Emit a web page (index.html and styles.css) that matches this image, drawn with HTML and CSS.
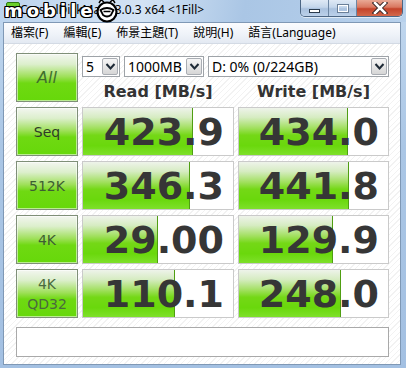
FILE: index.html
```html
<!DOCTYPE html>
<html lang="zh-Hant">
<head>
  <meta charset="UTF-8" />
  <title>CrystalDiskMark 3.0.3 x64</title>
  <link rel="stylesheet" href="styles.css">
</head>
<body>
  <div class="window">
    <div class="titlebar">
      <span class="app-icon"></span>
      <span class="title">CrystalDiskMark 3.0.3 x64 &lt;1Fill&gt;</span>
      <div class="caption">
        <span class="cap min"><span class="min-bar"></span></span>
        <span class="cap max"><span class="max-box"></span></span>
        <span class="cap close">
          <svg width="16" height="12" viewBox="0 0 16 12">
            <path d="M3 1 L13 11 M13 1 L3 11" stroke="#3a2a2a" stroke-width="4.5" stroke-linecap="square"/>
            <path d="M3 1 L13 11 M13 1 L3 11" stroke="#fff" stroke-width="2.5" stroke-linecap="square"/>
          </svg>
        </span>
      </div>
    </div>

    <!-- watermark sits over the caption -->
    <div class="watermark">
      <span class="wm-text">mobile</span>
      <svg class="wm-logo" width="26" height="24" viewBox="0 0 26 24">
        <path d="M5 4 L7 0.8 L10 3 M16 3 L19 0.8 L21 4" fill="#fff" stroke="#000" stroke-width="1.5"/>
        <circle cx="13" cy="13" r="9.5" fill="#fff" stroke="#000" stroke-width="2.2"/>
        <path d="M6.5 11 Q13 7 19.5 11 L17 16 Q13 19 9 16 Z" fill="#fff" stroke="#000" stroke-width="1.8"/>
        <path d="M9.5 12.5 L16.5 12.5" stroke="#000" stroke-width="1.5"/>
      </svg>
    </div>

    <div class="client">
      <div class="menubar">
        <span class="menu-item">檔案(F)</span>
        <span class="menu-item">編輯(E)</span>
        <span class="menu-item">佈景主題(T)</span>
        <span class="menu-item">說明(H)</span>
        <span class="menu-item">語言(Language)</span>
      </div>

      <div class="main">
        <div class="board">
          <div class="btn btn-all">All</div>
          <div class="top">
            <div class="selects">
              <div class="combo combo-count"><span class="combo-text">5</span><span class="combo-arrow"><svg width="13" height="13" viewBox="0 0 13 13"><path d="M2.5 4 L6.5 8.5 L10.5 4" fill="none" stroke="#1e2a36" stroke-width="2"/></svg></span></div>
              <div class="combo combo-size"><span class="combo-text">1000MB</span><span class="combo-arrow"><svg width="13" height="13" viewBox="0 0 13 13"><path d="M2.5 4 L6.5 8.5 L10.5 4" fill="none" stroke="#1e2a36" stroke-width="2"/></svg></span></div>
              <div class="combo combo-drive"><span class="combo-text">D: 0% (0/224GB)</span><span class="combo-arrow"><svg width="13" height="13" viewBox="0 0 13 13"><path d="M2.5 4 L6.5 8.5 L10.5 4" fill="none" stroke="#1e2a36" stroke-width="2"/></svg></span></div>
            </div>
            <div class="heads">
              <div class="head">Read [MB/s]</div>
              <div class="head">Write [MB/s]</div>
            </div>
          </div>

          <div class="btn btn-seq">Seq</div>
          <div class="cell"><div class="bar" style="width: 72.5%"></div><span class="num">423.9</span></div>
          <div class="cell"><div class="bar" style="width: 72.7%"></div><span class="num">434.0</span></div>

          <div class="btn">512K</div>
          <div class="cell"><div class="bar" style="width: 70.8%"></div><span class="num">346.3</span></div>
          <div class="cell"><div class="bar" style="width: 72.9%"></div><span class="num">441.8</span></div>

          <div class="btn">4K</div>
          <div class="cell"><div class="bar" style="width: 49.2%"></div><span class="num">29.00</span></div>
          <div class="cell"><div class="bar" style="width: 62.3%"></div><span class="num">129.9</span></div>

          <div class="btn btn-two">4K<br>QD32</div>
          <div class="cell"><div class="bar" style="width: 60.8%"></div><span class="num">110.1</span></div>
          <div class="cell"><div class="bar" style="width: 67.9%"></div><span class="num">248.0</span></div>

          <div class="comment"></div>
        </div>
      </div>
    </div>
  </div>
</body>
</html>
```

FILE: styles.css
```css
body {
  margin: 0;
  padding: 0;
  width: 406px;
  height: 368px;
  overflow: hidden;
  background: #b3cce8;
}

.window {
  position: relative;
  height: 368px;
  display: flex;
  flex-direction: column;
  background: linear-gradient(to bottom, #c2d8ef 0%, #aac6e5 40%, #a3c0e2 100%);
}

/* title bar */
.titlebar {
  height: 22px;
  display: flex;
  align-items: flex-start;
  background: linear-gradient(100deg, #bcd4ee 0%, #d3e3f4 35%, #aac6e5 60%, #b8d1ec 100%);
}

.app-icon {
  width: 12px;
  height: 4px;
  margin: 2px 0 0 6px;
  background: #6bcf2a;
  border: 1px solid #2f7a12;
  border-radius: 2px;
}

.title {
  margin-top: 2px;
  font-family: "Noto Sans", "Open Sans", sans-serif;
  font-size: 12px;
  line-height: 16px;
  color: #000;
  white-space: nowrap;
}

.caption {
  margin-left: auto;
  margin-right: 3px;
  display: flex;
  height: 16px;
  border: 1px solid #4c6684;
  border-top: none;
  border-radius: 0 0 5px 5px;
  overflow: hidden;
  box-shadow: 0 1px 0 rgba(255, 255, 255, 0.6);
}

.cap {
  display: flex;
  justify-content: center;
  align-items: center;
  height: 16px;
}

.min, .max {
  width: 27px;
  background: linear-gradient(to bottom, #dfe9f5 0%, #c4d6eb 45%, #a9c1de 55%, #bcd1ea 100%);
  border-right: 1px solid #6d86a3;
}

.close {
  width: 45px;
  background: linear-gradient(to bottom, #e9a995 0%, #d9775f 45%, #c4432a 55%, #d3694c 100%);
}

.min-bar {
  width: 9px;
  height: 2px;
  margin-top: 6px;
  background: #fff;
  border: 1px solid #2b3b4d;
}

.max-box {
  width: 8px;
  height: 5px;
  border: 1px solid #fff;
  outline: 1px solid #6a7f98;
}

/* watermark over the caption */
.watermark {
  position: absolute;
  left: 4px;
  top: -1px;
  display: flex;
  align-items: center;
}

.wm-text {
  font-family: "DejaVu Sans", sans-serif;
  font-weight: bold;
  font-size: 18px;
  letter-spacing: 4px;
  line-height: 22px;
  color: #fff;
  text-shadow: -1px -1px 0 #000, 1px -1px 0 #000, -1px 1px 0 #000, 1px 1px 0 #000,
    0 1px 0 #000, 0 -1px 0 #000, 1px 0 0 #000, -1px 0 0 #000;
}

.wm-logo {
  margin-left: -3px;
}

/* client area */
.client {
  flex: 1;
  display: flex;
  flex-direction: column;
  margin: 0 5px 3px 3px;
  border: 1px solid #7f98b5;
}

.menubar {
  height: 20px;
  display: flex;
  align-items: center;
  background: linear-gradient(to bottom, #fbfcfe 0%, #eef2f8 60%, #e3e9f2 100%);
  border-bottom: 1px solid #d3dae4;
  font-family: "Noto Sans", "Noto Sans CJK TC", sans-serif;
  font-size: 12px;
  color: #000;
}

.menu-item {
  padding: 0 7px;
  margin-right: 1px;
  line-height: 20px;
  white-space: nowrap;
}

.main {
  flex: 1;
  padding: 9px 11px 0 12px;
  background-color: #fff;
  background-image: repeating-linear-gradient(135deg, #fff 0, #fff 3px, #f2f2f2 3px, #f2f2f2 4px);
}

.board {
  display: grid;
  grid-template-columns: 62px 152px 151px;
  grid-template-rows: repeat(5, 49px) 34px;
  column-gap: 4px;
  row-gap: 5px;
}

/* left buttons */
.btn {
  display: flex;
  justify-content: center;
  align-items: center;
  box-sizing: border-box;
  border: 1px solid #7f8f78;
  box-shadow: inset 0 0 0 1px rgba(255, 255, 255, 0.55);
  background: linear-gradient(to bottom, #f3f6f0 0%, #dcefcc 22%, #9fe05a 48%, #6fd912 62%, #66d80a 100%);
  font-family: "DejaVu Sans", sans-serif;
  font-size: 14px;
  color: #3d5e32;
  text-align: center;
}

.btn-all {
  font-size: 16px;
  font-style: italic;
  color: #3f6f2c;
}

.btn-seq {
  color: #2e3c26;
}

.btn-two {
  line-height: 20px;
  padding-top: 1px;
  color: #4a6a3e;
}

/* top controls */
.top {
  grid-column: 2 / 4;
  display: flex;
  flex-direction: column;
}

.selects {
  display: flex;
  margin-top: 3px;
  height: 21px;
}

.combo {
  box-sizing: border-box;
  height: 21px;
  display: flex;
  align-items: center;
  background: #fff;
  border: 1px solid #9ea3a8;
  margin-right: 4px;
  font-family: "Noto Sans", "Open Sans", sans-serif;
  font-size: 14px;
  color: #000;
}

.combo-count {
  width: 38px;
}

.combo-size {
  width: 80px;
}

.combo-drive {
  width: 181px;
  margin-right: 0;
}

.combo-text {
  flex: 1;
  padding-left: 3px;
  line-height: 19px;
  white-space: nowrap;
  overflow: hidden;
}

.combo-arrow {
  width: 16px;
  height: 17px;
  margin-right: 1px;
  box-sizing: border-box;
  display: flex;
  justify-content: center;
  align-items: center;
  border: 1px solid #a9adb3;
  border-radius: 2px;
  background: linear-gradient(to bottom, #f6f6f6 0%, #e6e6e6 50%, #d6d6d6 100%);
}

.heads {
  display: flex;
  gap: 4px;
  margin-top: 4px;
}

.head {
  width: 152px;
  text-align: center;
  font-family: "DejaVu Sans", sans-serif;
  font-weight: bold;
  font-size: 16px;
  line-height: 21px;
  color: #333;
  white-space: nowrap;
}

.head + .head {
  width: 151px;
}

/* result cells */
.cell {
  position: relative;
  box-sizing: border-box;
  border: 1px solid #cacaca;
  background: #fff;
  display: flex;
  justify-content: flex-end;
  align-items: center;
  padding-right: 9px;
}

.bar {
  position: absolute;
  left: 0;
  top: 0;
  bottom: 0;
  border-right: 1px solid #4f9e12;
  background: linear-gradient(to bottom, #eef3ea 0%, #d6ecc2 20%, #a3e062 42%, #74d816 58%, #6ad80c 80%, #7ee02a 100%);
}

.num {
  position: relative;
  font-family: "DejaVu Sans", sans-serif;
  font-weight: bold;
  font-size: 38px;
  line-height: 44px;
  color: #363636;
}

.comment {
  grid-column: 1 / -1;
  margin-top: 4px;
  height: 30px;
  box-sizing: border-box;
  border: 1px solid #a9a9a9;
  background: #fff;
}
```
